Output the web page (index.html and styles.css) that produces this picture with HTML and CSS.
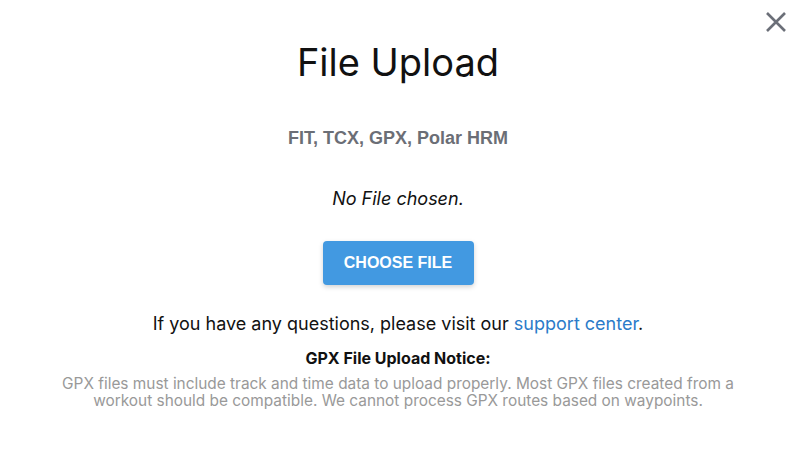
FILE: index.html
```html
<!DOCTYPE html>
<html>
<head>
<meta charset="utf-8">
<link rel="stylesheet" href="styles.css">
</head>
<body>
<div class="modal">
  <button class="close" aria-label="Close">
    <svg width="22" height="22" viewBox="0 0 22 22"><path d="M2 2 L20 20 M20 2 L2 20" stroke="#6b6f78" stroke-width="2.6" stroke-linecap="butt"/></svg>
  </button>
  <h1 class="title">File Upload</h1>
  <p class="formats">FIT, TCX, GPX, Polar HRM</p>
  <p class="chosen">No File chosen.</p>
  <button class="choose">CHOOSE FILE</button>
  <p class="help">If you have any questions, please visit our <a href="#">support center</a>.</p>
  <p class="notice-title">GPX File Upload Notice:</p>
  <p class="notice">GPX files must include track and time data to upload properly. Most GPX files created from a workout should be compatible. We cannot process GPX routes based on waypoints.</p>
</div>
</body>
</html>
```
FILE: styles.css
```css
html, body {
  margin: 0;
  padding: 0;
  background: #fff;
}
body {
  font-family: Inter, "Noto Sans", sans-serif;
  color: #111;
}
.modal {
  position: relative;
  width: 800px;
  height: 458px;
  display: flex;
  flex-direction: column;
  align-items: center;
  padding-top: 38px;
  padding-right: 4px;
  box-sizing: border-box;
}
.close {
  position: absolute;
  top: 11px;
  right: 13px;
  background: none;
  border: 0;
  padding: 0;
  width: 22px;
  height: 22px;
}
.title {
  margin: 0;
  font-size: 38px;
  font-weight: 400;
  line-height: 48px;
  color: #111;
}
.formats {
  margin: 40px 0 0;
  font-family: "Liberation Sans", Arial, sans-serif;
  font-weight: 700;
  font-size: 18px;
  line-height: 24px;
  color: #6b6e76;
}
.chosen {
  margin: 37px 0 0;
  font-style: italic;
  font-size: 18px;
  line-height: 24px;
  color: #111;
}
.choose {
  margin-top: 30px;
  width: 151px;
  height: 44px;
  border: 0;
  border-radius: 4px;
  background: #4299e1;
  color: #fff;
  font-family: "Liberation Sans", Arial, sans-serif;
  font-weight: 700;
  font-size: 16px;
  box-shadow: 0 2px 5px rgba(0,0,0,0.18);
}
.help {
  margin: 27px 0 0;
  font-size: 18px;
  line-height: 24px;
  color: #111;
}
.help a {
  color: #2b7bc9;
  text-decoration: none;
}
.notice-title {
  margin: 12px 0 0;
  font-weight: 700;
  font-size: 16px;
  line-height: 20px;
}
.notice {
  margin: 7px 0 0;
  width: 700px;
  text-align: center;
  font-size: 15.4px;
  line-height: 17px;
  color: #999;
}
```
